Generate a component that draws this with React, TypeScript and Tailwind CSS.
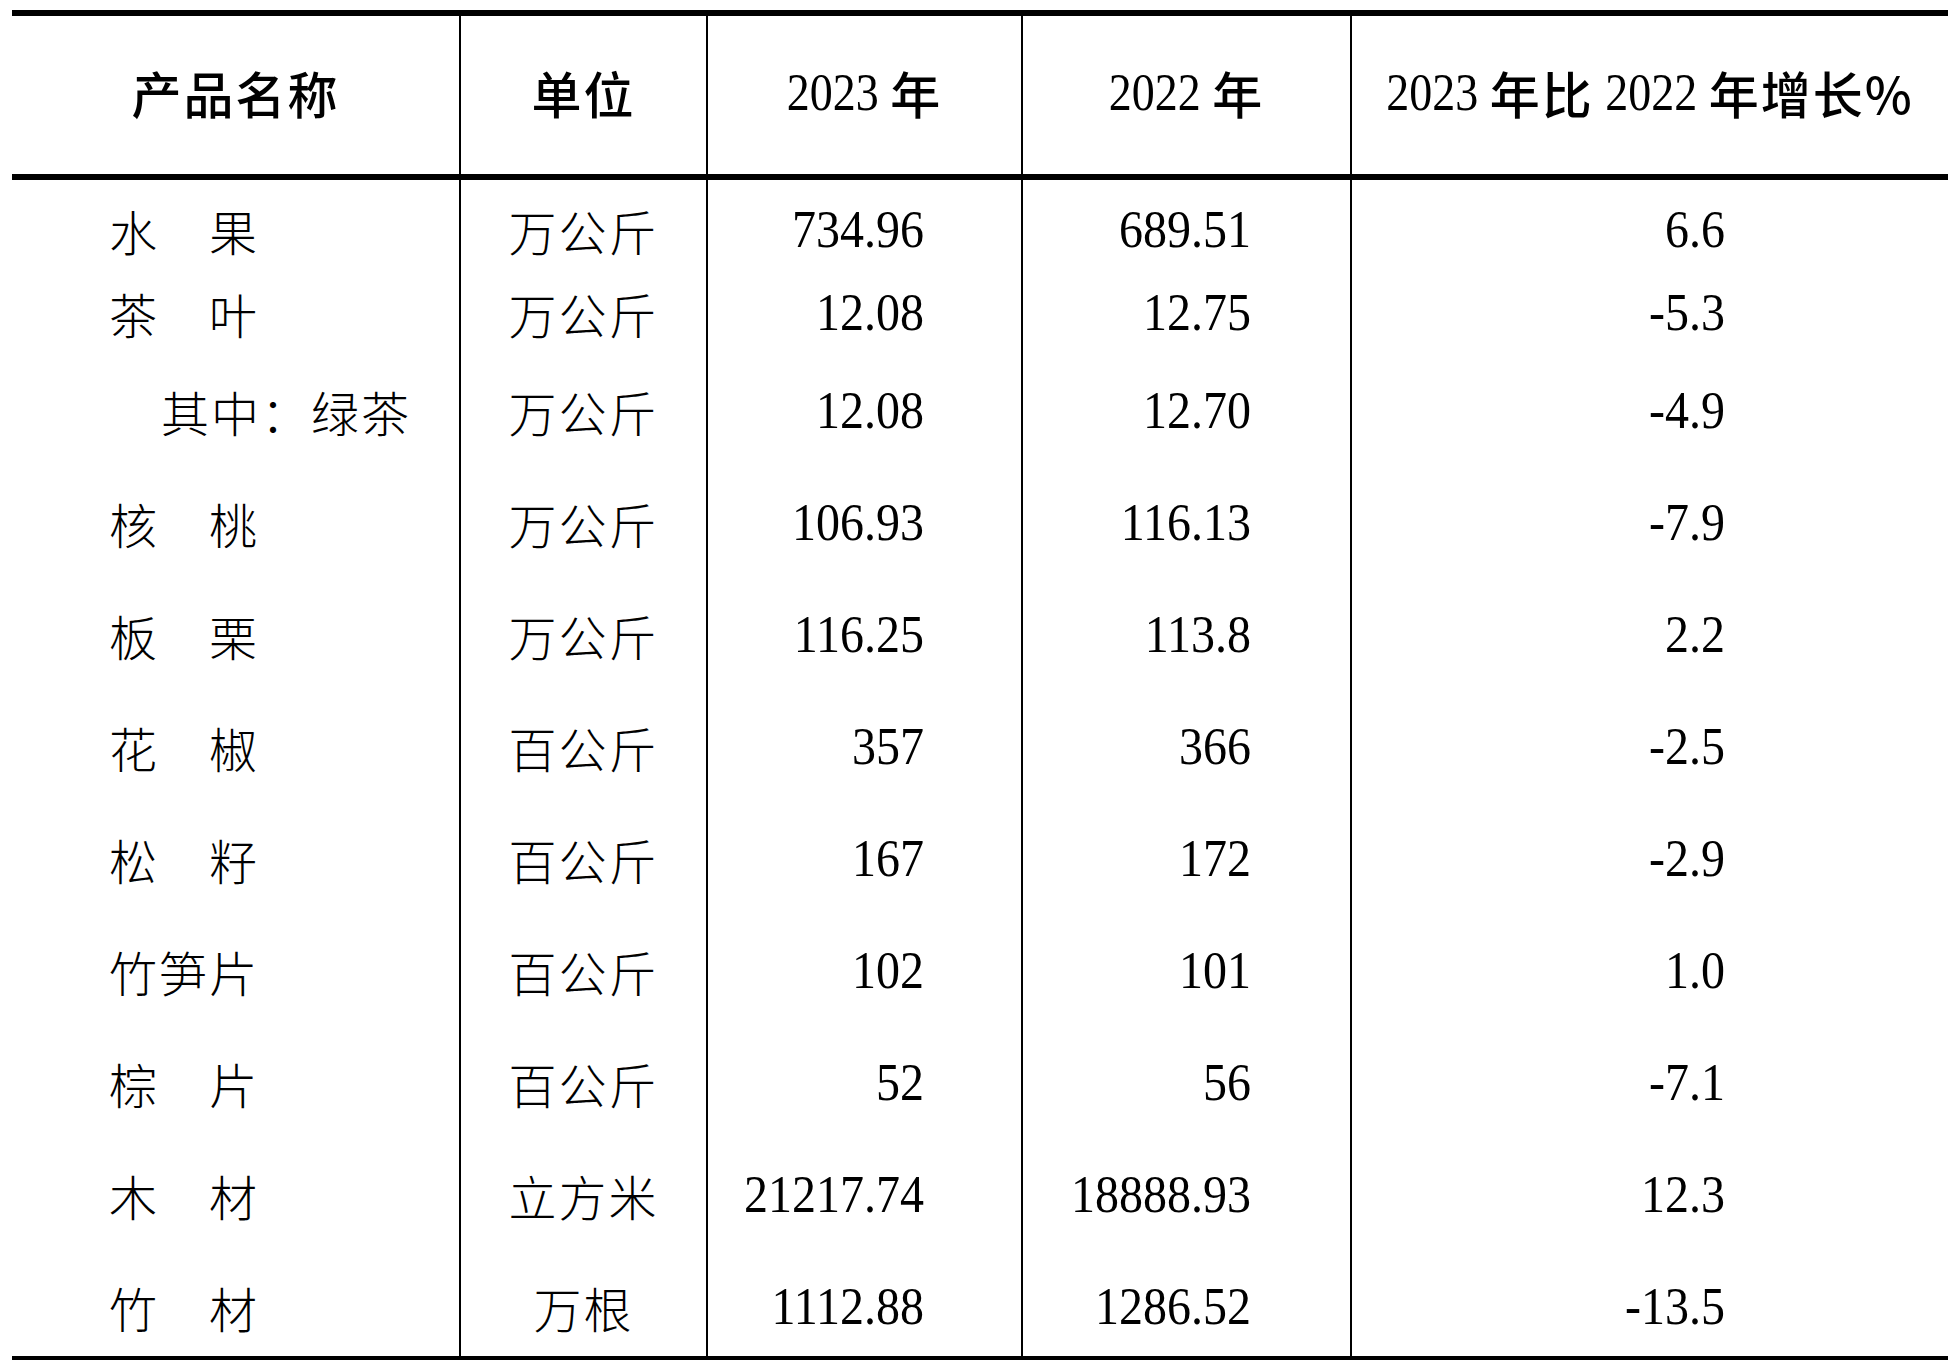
// App.tsx — 2023 林产品产量表 (static table page)

type Row = {
  name: string;
  indent?: boolean;
  unit: string;
  y2023: string;
  y2022: string;
  growth: string;
  // full class strings so Tailwind can pick them up
  h: string;
  pad: string;
};

const rows: Row[] = [
  { name: "水　果", unit: "万公斤", y2023: "734.96", y2022: "689.51", growth: "6.6", h: "h-[109px]", pad: "pt-[26px]" },
  { name: "茶　叶", unit: "万公斤", y2023: "12.08", y2022: "12.75", growth: "-5.3", h: "h-[98px]", pad: "" },
  { name: "其中：绿茶", indent: true, unit: "万公斤", y2023: "12.08", y2022: "12.70", growth: "-4.9", h: "h-[112px]", pad: "" },
  { name: "核　桃", unit: "万公斤", y2023: "106.93", y2022: "116.13", growth: "-7.9", h: "h-[112px]", pad: "" },
  { name: "板　栗", unit: "万公斤", y2023: "116.25", y2022: "113.8", growth: "2.2", h: "h-[112px]", pad: "" },
  { name: "花　椒", unit: "百公斤", y2023: "357", y2022: "366", growth: "-2.5", h: "h-[112px]", pad: "" },
  { name: "松　籽", unit: "百公斤", y2023: "167", y2022: "172", growth: "-2.9", h: "h-[112px]", pad: "" },
  { name: "竹笋片", unit: "百公斤", y2023: "102", y2022: "101", growth: "1.0", h: "h-[112px]", pad: "" },
  { name: "棕　片", unit: "百公斤", y2023: "52", y2022: "56", growth: "-7.1", h: "h-[112px]", pad: "" },
  { name: "木　材", unit: "立方米", y2023: "21217.74", y2022: "18888.93", growth: "12.3", h: "h-[112px]", pad: "" },
  { name: "竹　材", unit: "万根", y2023: "1112.88", y2022: "1286.52", growth: "-13.5", h: "h-[73px]", pad: "" },
];

const grid = "grid grid-cols-[447px_247px_315px_329px_598px]";
const cjk = "font-['Noto_Sans_CJK_SC',sans-serif]";
const serif = "font-['Liberation_Serif','Times_New_Roman',serif]";

function HNum({ children }: { children: string }) {
  return <span className={`${serif} inline-block scale-y-[1.15] text-[46px]`}>{children}</span>;
}

function HCjk({ children }: { children: string }) {
  return <span className={`${cjk} font-medium text-[50px] tracking-[2px]`}>{children}</span>;
}

function Num({ children }: { children: string }) {
  return <span className={`${serif} inline-block scale-y-[1.08] text-[48px] leading-[48px]`}>{children}</span>;
}

export default function App() {
  return (
    <div className="min-h-screen bg-white text-black pt-[10px] pl-[12px]">
      <div className="w-[1936px] border-t-[6px] border-black">
        {/* header */}
        <div className={`${grid} h-[164px] border-b-[6px] border-black`}>
          <div className="flex items-center justify-center pb-[5px]">
            <HCjk>产品名称</HCjk>
          </div>
          <div className="flex items-center justify-center pb-[5px] border-l-2 border-black">
            <HCjk>单位</HCjk>
          </div>
          <div className="flex items-center justify-center pb-[5px] border-l-2 border-black whitespace-pre">
            <HNum>2023 </HNum>
            <HCjk>年</HCjk>
          </div>
          <div className="flex items-center justify-center pb-[5px] border-l-2 border-black whitespace-pre">
            <HNum>2022 </HNum>
            <HCjk>年</HCjk>
          </div>
          <div className="flex items-center justify-center pb-[5px] border-l-2 border-black whitespace-pre">
            <HNum>2023 </HNum>
            <HCjk>年比</HCjk>
            <HNum> 2022 </HNum>
            <HCjk>年增长%</HCjk>
          </div>
        </div>

        {/* body */}
        <div className="border-b-[6px] border-black">
          {rows.map((r) => (
            <div key={r.name} className={`${grid} ${r.h}`}>
              <div className={`${r.pad} ${r.indent ? "pl-[149px]" : "pl-[97px]"}`}>
                <span className={`${cjk} font-light text-[48px] leading-[48px] tracking-[2px] whitespace-pre`}>
                  {r.name}
                </span>
              </div>
              <div className={`${r.pad} border-l-2 border-black text-center`}>
                <span className={`${cjk} font-light text-[48px] leading-[48px] tracking-[2px]`}>{r.unit}</span>
              </div>
              <div className={`${r.pad} border-l-2 border-black text-right pr-[97px]`}>
                <Num>{r.y2023}</Num>
              </div>
              <div className={`${r.pad} border-l-2 border-black text-right pr-[99px]`}>
                <Num>{r.y2022}</Num>
              </div>
              <div className={`${r.pad} border-l-2 border-black text-right pr-[223px]`}>
                <Num>{r.growth}</Num>
              </div>
            </div>
          ))}
        </div>
      </div>
    </div>
  );
}
